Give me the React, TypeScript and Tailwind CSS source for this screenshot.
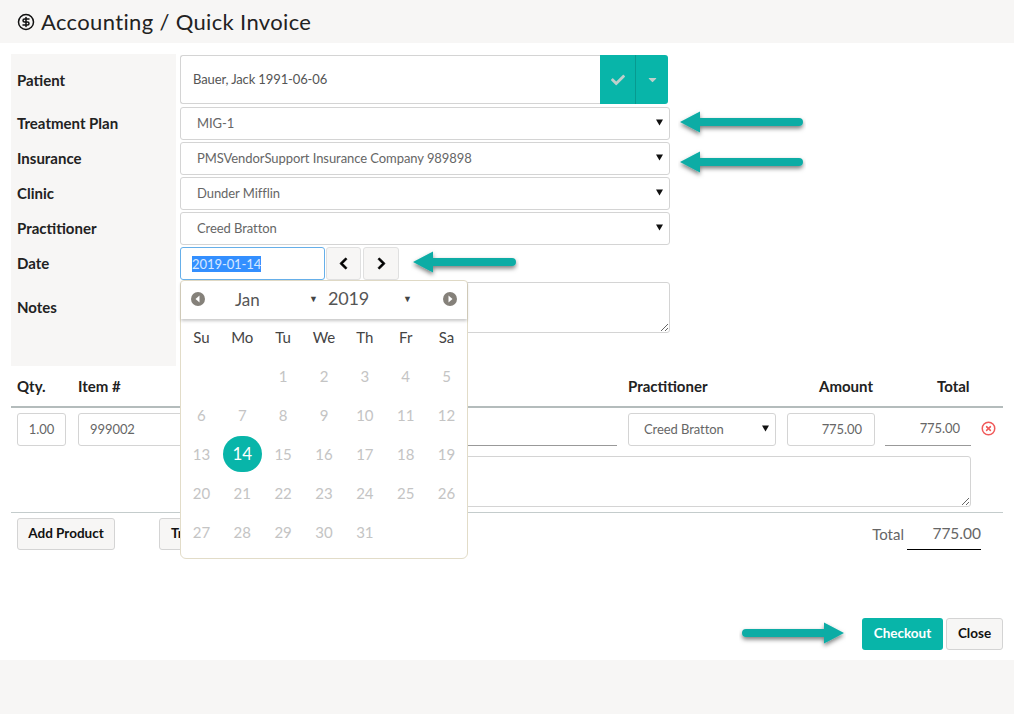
import React from "react";
import { CircleDollarSign, CircleX } from "lucide-react";
import { FaCheck, FaCaretDown, FaChevronLeft, FaChevronRight } from "react-icons/fa";

function Arrow({ cls, dir, len }: { cls: string; dir: "left" | "right"; len: number }) {
  const w = len + 5;
  return (
    <svg className={`absolute ${cls}`} width={w} height="30" viewBox={`0 0 ${w} 30`}>
      <defs>
        <filter id={`s${dir}${len}`} x="-10%" y="-40%" width="120%" height="190%">
          <feDropShadow dx="0" dy="2.5" stdDeviation="2" floodColor="#000" floodOpacity="0.5" />
        </filter>
      </defs>
      <g filter={`url(#s${dir}${len})`} transform={dir === "right" ? `translate(${w} 0) scale(-1 1)` : undefined}>
        <path d={`M2 13 L22 2.5 L22 9 L${len - 2} 9 A4 4 0 0 1 ${len - 2} 17 L22 17 L22 23.5 Z`} fill="#0aaca5" />
      </g>
    </svg>
  );
}

function Select({ text, cls = "", pl = "pl-[16px]" }: { text: string; cls?: string; pl?: string }) {
  return (
    <div className={`flex items-center justify-between border border-[#d4d4d4] rounded-[3px] bg-white text-[13px] tracking-[-0.07px] text-[#666] pr-[6px] ${pl} ${cls}`}>
      <span>{text}</span>
      <svg width="7" height="7" viewBox="0 0 7 7" className="mb-[3px]"><path d="M0 0.5H7L3.5 6.5Z" fill="#111" /></svg>
    </div>
  );
}

function Label({ text, cls }: { text: string; cls: string }) {
  return <div className={`flex items-center pl-[6px] text-[15px] font-bold text-[#222] ${cls}`}>{text}</div>;
}

function CalNav({ dir }: { dir: "l" | "r" }) {
  return (
    <svg width="14" height="14" viewBox="0 0 14 14">
      <circle cx="7" cy="7" r="7" fill="#85817a" />
      <path d={dir === "l" ? "M8.5 3.5V10.5L4.5 7Z" : "M5.5 3.5V10.5L9.5 7Z"} fill="#fff" />
    </svg>
  );
}

const weeks = [
  ["", "", "1", "2", "3", "4", "5"],
  ["6", "7", "8", "9", "10", "11", "12"],
  ["13", "14", "15", "16", "17", "18", "19"],
  ["20", "21", "22", "23", "24", "25", "26"],
  ["27", "28", "29", "30", "31", "", ""],
];

function Calendar() {
  return (
    <div className="absolute left-[180px] top-[280px] w-[288px] h-[279px] bg-white border border-[#e2dcc8] rounded-b-[6px] rounded-t-[4px] font-['Lato',sans-serif]">
      <div className="h-[38px] flex items-center px-[10px] shadow-[0_2px_3px_rgba(0,0,0,0.22)] text-[#555]">
        <span className="-mt-[2px] flex"><CalNav dir="l" /></span>
        <span className="ml-[30px] w-[74px] text-[17px] -mt-[1px]">Jan</span>
        <span className="text-[9px] text-[#444] mb-[3px]">▼</span>
        <span className="ml-[10px] w-[75px] text-[18px] tracking-[-0.2px] -mt-[3px]">2019</span>
        <span className="text-[9px] text-[#444] mb-[3px]">▼</span>
        <span className="ml-auto -mt-[2px] flex"><CalNav dir="r" /></span>
      </div>
      <div className="grid grid-cols-7 w-[286px] -mt-[1px] text-[15px]">
        {["Su", "Mo", "Tu", "We", "Th", "Fr", "Sa"].map((d) => (
          <div key={d} className="h-[39px] flex items-center justify-center text-[#444]">{d}</div>
        ))}
        {weeks.flat().map((d, i) => (
          <div key={i} className="h-[39px] flex items-center justify-center text-[#c4c4c4]">
            {d === "14" ? (
              <span className="w-[39px] h-[36px] -mt-[1px] rounded-full bg-[#08b5a9] text-white flex items-center justify-center text-[17px]">14</span>
            ) : (
              d
            )}
          </div>
        ))}
      </div>
    </div>
  );
}

export default function App() {
  return (
    <div className="relative w-[1014px] h-[714px] bg-[#f7f6f5] overflow-hidden font-['Lato',sans-serif]">
      <header className="h-[43px] flex items-center pl-[17px] gap-[6px] text-[22px] text-[#222] tracking-[0.35px]">
        <CircleDollarSign size={18} strokeWidth={2} color="#111" />
        <span>Accounting / Quick Invoice</span>
      </header>

      <main className="h-[617px] bg-white px-[11px] pt-[11px]">
        <section className="flex h-[312px]">
          <div className="w-[165px] bg-[#f7f6f5]">
            <Label text="Patient" cls="h-[52px]" />
            <Label text="Treatment Plan" cls="h-[35px]" />
            <Label text="Insurance" cls="h-[35px]" />
            <Label text="Clinic" cls="h-[35px]" />
            <Label text="Practitioner" cls="h-[35px]" />
            <Label text="Date" cls="h-[35px]" />
            <Label text="Notes" cls="h-[53px]" />
          </div>
          <div className="ml-[4px] w-[490px] pt-[1px] flex flex-col gap-[2px]">
            <div className="flex h-[49px] w-[488px] mb-[1px]">
              <div className="flex-1 flex items-center border border-r-0 border-[#d4d4d4] rounded-l-[3px] pl-[12px] text-[13px] tracking-[-0.12px] text-[#555]">Bauer, Jack 1991-06-06</div>
              <div className="w-[36px] bg-[#08b5a9] flex items-center justify-center border-r border-[#079a90]">
                <FaCheck size={14} color="#bfcfcb" />
              </div>
              <div className="w-[32px] bg-[#08b5a9] rounded-r-[3px] flex items-center justify-center">
                <FaCaretDown size={13} color="#bfcfcb" />
              </div>
            </div>
            <Select text="MIG-1" cls="h-[33px]" />
            <Select text="PMSVendorSupport Insurance Company 989898" cls="h-[33px]" />
            <Select text="Dunder Mifflin" cls="h-[33px]" />
            <Select text="Creed Bratton" cls="h-[33px]" />
            <div className="flex h-[33px]">
              <div className="w-[145px] flex items-center border border-[#66afe9] rounded-[3px] pl-[11px] text-[13px] tracking-[-0.07px]">
                <span className="bg-[#338fff] text-white/80 leading-[16px]">2019-01-14</span>
              </div>
              <div className="ml-[1px] w-[35px] flex items-center justify-center bg-[#f7f6f5] border border-[#e0e0e0] rounded-[3px]"><FaChevronLeft size={13} color="#000" stroke="#000" strokeWidth={30} /></div>
              <div className="ml-[2px] w-[36px] flex items-center justify-center bg-[#f7f6f5] border border-[#e0e0e0] rounded-[3px]"><FaChevronRight size={13} color="#000" stroke="#000" strokeWidth={30} /></div>
            </div>
            <textarea readOnly className="block h-[51px] border border-[#d4d4d4] rounded-[3px] resize-y outline-none" />
          </div>
        </section>

        <div className="h-[40px] flex items-center text-[15px] font-bold text-[#222] pb-[0px]">
          <span className="ml-[6px] w-[61px]">Qty.</span>
          <span className="w-[550px]">Item #</span>
          <span className="w-[191px]">Practitioner</span>
          <span className="w-[56px]">Amount</span>
          <span className="ml-[62px]">Total</span>
        </div>
        <div className="h-[2px] w-[992px] bg-[#b4bcbc]" />

        <div className="flex items-start h-[48px] pt-[5px] text-[13px] tracking-[-0.07px] text-[#666] relative">
          <div className="ml-[6px] w-[49px] h-[33px] border border-[#d4d4d4] rounded-[3px] flex items-center justify-center">1.00</div>
          <div className="ml-[12px] w-[120px] h-[33px] border border-[#d4d4d4] rounded-l-[3px] pl-[11px] flex items-center">999002</div>
          <div className="w-[419px] h-[33px] border-b border-[#999]" />
          <Select text="Creed Bratton" cls="ml-[11px] w-[148px] h-[33px]" pl="pl-[15px]" />
          <div className="ml-[11px] w-[88px] h-[33px] border border-[#d4d4d4] rounded-[3px] flex items-center justify-end pr-[12px]">775.00</div>
          <div className="ml-[10px] w-[86px] h-[33px] border-b border-[#999] flex items-center justify-end pr-[11px]">775.00</div>
          <CircleX size={15} color="#f05a5a" strokeWidth={2.4} className="ml-[10px] mt-[8px]" />
        </div>

        <textarea readOnly className="block ml-[200px] w-[760px] h-[51px] border border-[#d4d4d4] rounded-[3px] resize-y outline-none" />
        <div className="h-px w-[992px] bg-[#c4cccc] mt-[5px]" />

        <div className="flex items-start pt-[5px] relative">
          <button className="ml-[6px] w-[98px] h-[32px] pb-[2px] bg-[#f7f6f5] border border-[#d4d4d4] rounded-[3px] text-[13.5px] font-bold text-[#111]">Add Product</button>
          <button className="ml-[44px] w-[120px] h-[32px] pb-[2px] bg-[#f7f6f5] border border-[#d4d4d4] rounded-[3px] text-[13.5px] font-bold text-[#111] pl-[11px] text-left">Tr</button>
          <div className="ml-auto mr-[22px] flex items-center h-[32px] text-[#666]">
            <span className="text-[15px] mr-[3px]">Total</span>
            <span className="w-[74px] h-[32px] border-b border-black text-[15.5px] flex items-center justify-end">775.00</span>
          </div>
        </div>

        <div className="flex justify-end gap-[3px] mt-[68px]">
          <button className="w-[81px] h-[32px] pb-[2px] bg-[#08b5a9] rounded-[3px] text-white text-[13.5px] font-bold">Checkout</button>
          <button className="w-[57px] h-[32px] pb-[2px] bg-[#f7f6f5] border border-[#d4d4d4] rounded-[3px] text-[13.5px] font-bold text-[#111]">Close</button>
        </div>
      </main>

      <Calendar />
      <Arrow cls="left-[678px] top-[109px]" dir="left" len={123} />
      <Arrow cls="left-[678px] top-[149px]" dir="left" len={123} />
      <Arrow cls="left-[411px] top-[249px]" dir="left" len={103} />
      <Arrow cls="left-[739px] top-[620px]" dir="right" len={102} />
    </div>
  );
}
